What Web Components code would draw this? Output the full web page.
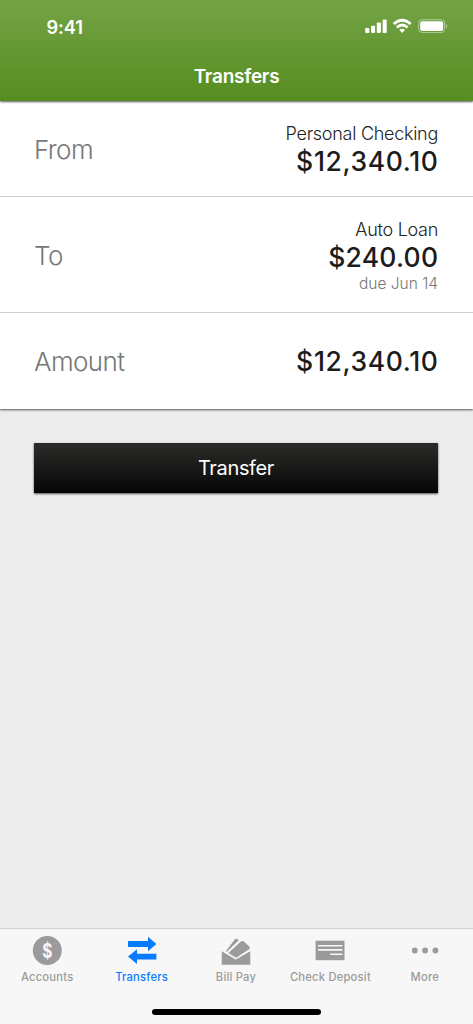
<!DOCTYPE html>
<html lang="en">
<head>
<meta charset="utf-8">
<meta name="viewport" content="width=device-width, initial-scale=1">
<title>Transfers</title>
<style>
  html, body { height: 100%; }
  body {
    margin: 0;
    font-family: Inter, "Liberation Sans", sans-serif;
    background: #ececec;
    overflow: hidden;
  }
</style>
</head>
<body>
<transfer-screen></transfer-screen>

<script>
(() => {
  const ICONS = {
    accounts: '<circle cx="15.3" cy="14.5" r="14.5"/><text transform="translate(15.3 21.8) scale(.76 1)" text-anchor="middle" font-size="20.5" font-weight="700" fill="#f7f7f7">$</text>',
    transfers: '<path d="M1 5h20V.7L29.4 8 21 15.2V11H1Z"/><path d="M29.4 17.8H10v-4.5L1 20.5l9 7.5v-4.4h19.4Z"/>',
    bill: '<path d="M.7 15.2 14.8 23.6 29.3 15.2V28.7H.7Z"/><path d="M4.8 15.2 13.7 3.4Q14.9 2 16.5 3.2L17.8 4.3 5.9 15.8Z"/><path d="M7.4 17 19.6 5.8Q21.3 4.3 22.9 5.6L28.3 10.4Q29.8 11.9 28 13.3L15.2 21.8Z"/>',
    check: '<path d="M.6 4.7h28.9v19.5H.6Z"/><path d="M3 9.8h24.4M3 13.9h24.4M15.2 18.2h12.2" fill="none" stroke="#f7f7f7" stroke-width="1.6"/>',
    more: '<circle cx="4.8" cy="14.5" r="2.9"/><circle cx="15.1" cy="14.5" r="2.9"/><circle cx="25.4" cy="14.5" r="2.9"/>'
  };

  const define = (name, html) => {
    const template = document.createElement('template');
    template.innerHTML = html;
    customElements.define(name, class extends HTMLElement {
      connectedCallback() {
        if (this.shadowRoot) return;
        this.attachShadow({ mode: 'open' }).append(template.content.cloneNode(true));
      }
    });
  };

  define('status-bar', `
    <style>
      :host {
        display: flex;
        align-items: center;
        justify-content: space-between;
        box-sizing: border-box;
        height: 52px;
        padding: 0 25px 0 46.5px;
        color: #fff;
      }
      time { padding-top: 1px; font-size: 18.3px; font-weight: 580; letter-spacing: -.1px; line-height: 22px; }
      svg { display: block; width: 84px; height: 16px; }
    </style>
    <time>9:41</time>
    <svg viewBox="0 0 84 16" fill="#fff" aria-hidden="true">
      <rect x="1.2" y="10" width="4.1" height="5" rx="1"/>
      <rect x="7" y="7.7" width="4.1" height="7.3" rx="1"/>
      <rect x="12.8" y="4.6" width="4.1" height="10.4" rx="1"/>
      <rect x="18.6" y="1.5" width="4.1" height="13.5" rx="1"/>
      <g fill="none" stroke="#fff" stroke-width="2.7">
        <path d="M29.7 6.1Q38.2-1.6 46.7 6.1"/>
        <path d="M32.8 9.4Q38.2 4.6 43.6 9.4"/>
      </g>
      <path d="M35.4 11.9Q38.2 9.7 41 11.9L38.2 14.9Z"/>
      <rect x="54.7" y="1.7" width="26" height="12.8" rx="3.4" fill="none" stroke="#fff" stroke-opacity=".45"/>
      <rect x="56.2" y="3.2" width="23" height="9.8" rx="2"/>
      <path d="M82 6v4.5c1.7-.7 1.7-3.8 0-4.5Z" opacity=".5"/>
    </svg>
  `);

  define('nav-header', `
    <style>
      :host {
        position: relative;
        z-index: 1;
        display: flex;
        flex-direction: column;
        height: 101px;
        background: linear-gradient(#74a345, #568d20);
        box-shadow: 0 1px 2px rgba(0,0,0,.65);
      }
      h1 {
        margin: 0;
        padding-top: 13px;
        color: #fff;
        font-size: 19px;
        font-weight: 560;
        line-height: 24px;
        letter-spacing: -.25px;
        text-align: center;
      }
    </style>
    <status-bar></status-bar>
    <h1><slot></slot></h1>
  `);

  define('transfer-row', `
    <style>
      :host {
        display: flex;
        align-items: center;
        justify-content: space-between;
        box-sizing: border-box;
        height: var(--row-height, 96px);
        padding: 0 35px 0 34px;
        border-bottom: 1px solid #cfcfcf;
        background: #fff;
      }
      :host(:last-of-type) { border-bottom: 0; }
      .label {
        padding-top: 2px;
        color: #777;
        font-size: 26px;
        font-weight: 300;
        letter-spacing: -.6px;
        line-height: 32px;
      }
      .value { display: grid; justify-items: end; padding-top: var(--value-shift, 1px); }
      ::slotted(*) { display: block; }
      ::slotted([slot="account"]) {
        color: #222;
        font-size: 18px;
        font-weight: 320;
        line-height: 24px;
        letter-spacing: -.28px;
      }
      ::slotted([slot="amount"]) {
        margin-right: calc(0px - var(--tracking, .65px));
        color: #1c1c1c;
        font-size: 26.5px;
        font-weight: 470;
        letter-spacing: var(--tracking, .65px);
        line-height: 31px;
      }
      ::slotted([slot="note"]) {
        color: #777;
        font-size: 15.5px;
        font-weight: 300;
        line-height: 21px;
      }
    </style>
    <span class="label"><slot></slot></span>
    <div class="value">
      <slot name="account"></slot>
      <slot name="amount"></slot>
      <slot name="note"></slot>
    </div>
  `);

  define('action-button', `
    <style>
      :host { display: block; }
      button {
        display: block;
        width: 100%;
        height: 50px;
        margin: 0;
        border: 0;
        padding: 0;
        color: #fff;
        background: linear-gradient(#2c2d2a, #050505);
        box-shadow: 0 1px 2px rgba(0,0,0,.65);
        font: 400 20px/50px Inter, "Liberation Sans", sans-serif;
        letter-spacing: -.35px;
      }
    </style>
    <button type="button"><slot></slot></button>
  `);

  class TabItem extends HTMLElement {
    connectedCallback() {
      if (this.shadowRoot) return;
      this.attachShadow({ mode: 'open' }).innerHTML = `
        <style>
          :host {
            display: flex;
            flex-direction: column;
            align-items: center;
            color: #9b9b9b;
            font-size: 11.2px;
            font-weight: 500;
            line-height: 14px;
            letter-spacing: .22px;
            white-space: nowrap;
          }
          :host([active]) { color: #077bff; }
          svg { display: block; width: 30px; height: 30px; margin: 7px 0 4px; fill: currentColor; }
        </style>
        <svg viewBox="0 0 30 30" aria-hidden="true">${ICONS[this.getAttribute('icon')]}</svg>
        <slot></slot>
      `;
    }
  }
  customElements.define('tab-item', TabItem);

  define('tab-bar', `
    <style>
      :host {
        display: flex;
        flex-direction: column;
        justify-content: space-between;
        align-items: center;
        box-sizing: border-box;
        height: 96px;
        border-top: 1px solid #d3d3d3;
        padding-bottom: 9px;
        background: #f7f7f7;
      }
      nav { display: grid; grid-template-columns: repeat(5, 1fr); box-sizing: border-box; width: 100%; padding-right: 1px; }
      .home { width: 169px; height: 6px; border-radius: 3px; background: #000; }
    </style>
    <nav><slot></slot></nav>
    <div class="home"></div>
  `);

  define('transfer-screen', `
    <style>
      :host { display: flex; flex-direction: column; height: 1024px; background: #ececec; }
      .form { box-shadow: 0 1px 2px rgba(0,0,0,.65); }
      .from { --row-height: 96px; }
      .to { --row-height: 116px; --value-shift: 3px; --tracking: .25px; }
      .amount { --row-height: 96px; }
      main { flex: 1; }
      action-button { margin: 34px 35px 0 34px; }
    </style>
    <nav-header>Transfers</nav-header>
    <main>
      <div class="form">
        <transfer-row class="from">From
          <span slot="account">Personal Checking</span>
          <span slot="amount">$12,340.10</span>
        </transfer-row>
        <transfer-row class="to">To
          <span slot="account">Auto Loan</span>
          <span slot="amount">$240.00</span>
          <span slot="note">due Jun 14</span>
        </transfer-row>
        <transfer-row class="amount">Amount
          <span slot="amount">$12,340.10</span>
        </transfer-row>
      </div>
      <action-button>Transfer</action-button>
    </main>
    <tab-bar>
      <tab-item icon="accounts">Accounts</tab-item>
      <tab-item icon="transfers" active>Transfers</tab-item>
      <tab-item icon="bill">Bill Pay</tab-item>
      <tab-item icon="check">Check Deposit</tab-item>
      <tab-item icon="more">More</tab-item>
    </tab-bar>
  `);
})();
</script>
</body>
</html>
